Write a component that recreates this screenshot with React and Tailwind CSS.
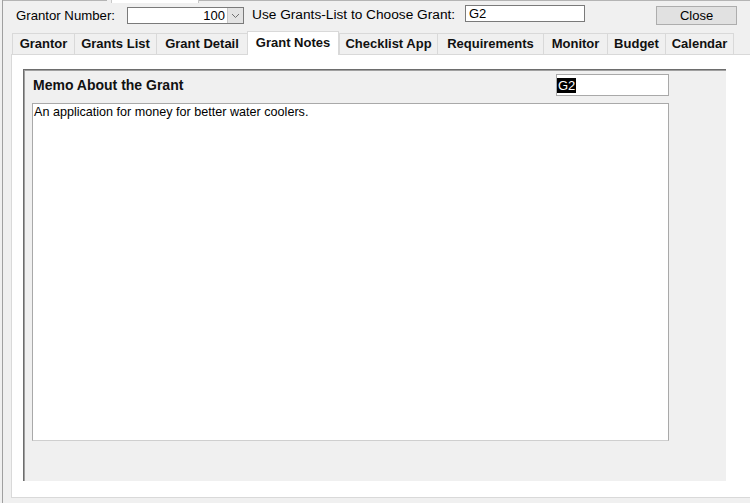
export default function App() {
  const tabs = [
    { label: "Grantor", w: "w-[62px]" },
    { label: "Grants List", w: "w-[82px]" },
    { label: "Grant Detail", w: "w-[91px]" },
    { label: "Grant Notes", w: "w-[92px]", active: true },
    { label: "Checklist App", w: "w-[98px]" },
    { label: "Requirements", w: "w-[106px]" },
    { label: "Monitor", w: "w-[64px]" },
    { label: "Budget", w: "w-[58px]" },
    { label: "Calendar", w: "w-[69px]" },
  ];

  return (
    <div className="w-[750px] h-[503px] overflow-hidden bg-[#f0f0f0] pl-[2px] font-['Liberation_Sans',Arial,sans-serif] text-black">
      <div className="h-full border-l border-[#a0a0a0]">
        {/* top strip remnant */}
        <div className="flex h-[3px]">
          <div className="w-[104px] border-t border-[#b4b4b4]" />
          <div className="w-[88px] ml-[4px] bg-white border-x border-[#c8c8c8]" />
          <div className="flex-1 border-t border-[#b4b4b4]" />
        </div>

        {/* Header row */}
        <div className="flex items-center h-[25px] text-[13px]">
          <span className="ml-[13px] w-[111px] text-[13.2px]">Grantor Number:</span>
          <div className="w-[117px] h-[17px] border border-[#7a7a7a] bg-white flex">
            <span className="flex-1 text-right pr-[2px] leading-[15px]">100</span>
            <div className="w-[16px] h-full bg-[#e3e3e3] border-l border-[#c8c8c8] flex items-center justify-center">
              <svg width="9" height="6" viewBox="0 0 9 6">
                <polyline points="1,1 4.5,4.5 8,1" fill="none" stroke="#707070" strokeWidth="1" />
              </svg>
            </div>
          </div>
          <span className="ml-[8px] w-[213px] text-[13.7px]">Use Grants-List to Choose Grant:</span>
          <div className="w-[120px] h-[17px] -mt-[4px] border border-[#7a7a7a] bg-white leading-[15px] pl-[3px]">
            G2
          </div>
          <button className="ml-[71px] w-[81px] h-[19px] bg-[#e1e1e1] border border-[#adadad] text-[13px] leading-[17px] text-center">
            Close
          </button>
        </div>

        {/* Tabs */}
        <div className="flex items-end h-[26px] ml-[9px] text-[13px] font-bold text-[#111]">
          {tabs.map((t, i) =>
            t.active ? (
              <div
                key={t.label}
                className={`${t.w} h-[24px] -mb-px relative z-10 bg-white border-t border-x border-[#d9d9d9] flex items-center justify-center pb-[2px]`}
              >
                {t.label}
              </div>
            ) : (
              <div
                key={t.label}
                className={`${t.w} h-[21px] bg-[#f0f0f0] border-t border-l border-[#d9d9d9] flex items-center justify-center ${
                  i === tabs.length - 1 ? "border-r" : ""
                }`}
              >
                {t.label}
              </div>
            )
          )}
        </div>

        {/* Tab panel */}
        <div className="ml-[8px] h-[444px] bg-white border-t border-l border-b border-[#d9d9d9] pt-[14px]">
          <div className="ml-[11px] w-[703px] h-[412px] bg-[#f0f0f0] border-t border-l border-[#6d6d6d] shadow-[inset_1px_1px_0_#a0a0a0]">
            <div className="ml-[8px] w-[637px]">
              <div className="flex items-center h-[22px] mt-[4px]">
                <span className="pl-[1px] text-[14px] font-bold text-[#111]">Memo About the Grant</span>
                <div className="ml-auto w-[113px] h-[22px] bg-white border border-[#a9a9a9] pt-[1px] text-[13px]">
                  <span className="inline-block bg-black text-white leading-[15px] px-[1px]">G2</span>
                </div>
              </div>
              <div className="mt-[7px] h-[338px] bg-white border border-[#a9a9a9] border-b-[#cfcfcf] pl-[1px] pt-[1px] text-[12.6px] leading-[15px]">
                An application for money for better water coolers.
              </div>
            </div>
          </div>
        </div>
      </div>
    </div>
  );
}
